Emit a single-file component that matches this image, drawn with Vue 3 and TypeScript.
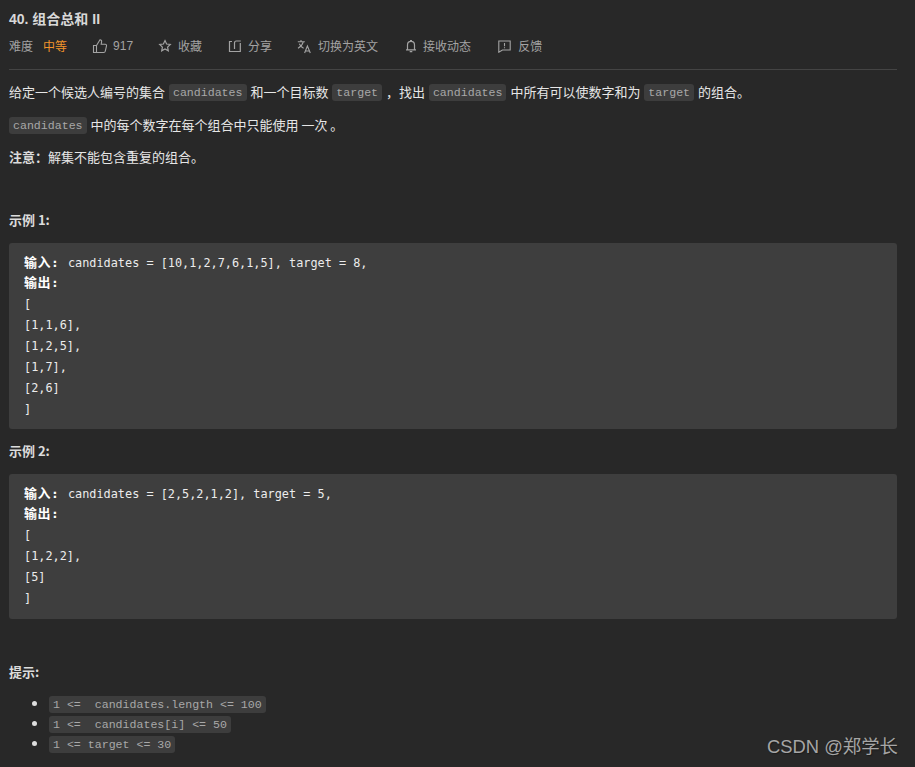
<script setup lang="ts">
</script>

<template>
  <div class="page">
    <div class="title">40. 组合总和 II</div>
    <div class="meta">
      <span class="item diff">难度<b>中等</b></span>
      <span class="item like">
        <svg width="16" height="16" viewBox="0 0 16 16" fill="none" stroke="currentColor" stroke-width="1.1"><path d="M1.500 7.500h3v7h-3zM4.500 7.500 8 1.800c1.200 0 1.800.8 1.600 2L9.200 6.200h4c1 0 1.500.8 1.300 1.700l-1.200 5.300c-.2.8-.7 1.300-1.600 1.300H4.500"/></svg>
        917
      </span>
      <span class="item fav">
        <svg width="14" height="14" viewBox="0 0 14 14" fill="none" stroke="currentColor" stroke-width="1.2"><path d="M7 1.600 8.600 5l3.700.5-2.700 2.600.7 3.700L7 10l-3.300 1.800.7-3.700-2.700-2.600L5.400 5z"/></svg>
        收藏
      </span>
      <span class="item share">
        <svg width="14" height="14" viewBox="0 0 14 14" fill="none" stroke="currentColor" stroke-width="1.2"><path d="M4 2.500H1.500v10h10.800V4M6.500 10V4c0-1.200.6-2 1.800-2h4.500"/></svg>
        分享
      </span>
      <span class="item lang">
        <svg width="15" height="15" viewBox="0 0 15 15" fill="none" stroke="currentColor" stroke-width="1.1"><path d="M.8 2.800h7M4 1v1.800M6.300 2.800C5.500 5.500 3.500 8 1 9.300M2.300 4.800c.9 2 2.500 3.500 4.300 4.400M7.600 14 10.400 7l2.900 7M8.600 12h3.800"/></svg>
        切换为英文
      </span>
      <span class="item bell">
        <svg width="12" height="14" viewBox="0 0 12 14" fill="none" stroke="currentColor" stroke-width="1.2"><path d="M1 10.800h10M2.500 10.800V6c0-2 1.400-3.600 3.500-3.600S9.500 4 9.500 6v4.800M5 1.500h2M4.700 12.600h2.600"/></svg>
        接收动态
      </span>
      <span class="item back">
        <svg width="13" height="13" viewBox="0 0 13 13" fill="none" stroke="currentColor" stroke-width="1.1"><path d="M.8 1h11.400v9H4.500L.8 12.200zM6.500 3v3.200M6.500 7.300v1"/></svg>
        反馈
      </span>
    </div>
    <div class="rule"></div>

    <p class="first">给定一个候选人编号的集合 <code>candidates</code> 和一个目标数 <code>target</code> ，找出 <code>candidates</code> 中所有可以使数字和为 <code>target</code> 的组合。</p>
    <p class="second"><code>candidates</code> 中的每个数字在每个组合中只能使用 一次 。</p>
    <p><strong>注意：</strong>解集不能包含重复的组合。</p>

    <p class="ex1"><strong>示例 1:</strong></p>
    <pre class="box"><span class="l1"><strong>输入:</strong> candidates = [10,1,2,7,6,1,5], target = 8,</span><strong>输出:</strong>
[
[1,1,6],
[1,2,5],
[1,7],
[2,6]
]</pre>
    <p class="ex2"><strong>示例 2:</strong></p>
    <pre class="box last"><span class="l1"><strong>输入:</strong> candidates = [2,5,2,1,2], target = 5,</span><strong>输出:</strong>
[
[1,2,2],
[5]
]</pre>

    <p class="hint"><strong>提示:</strong></p>
    <ul>
      <li><code>1 &lt;=&nbsp; candidates.length &lt;= 100</code></li>
      <li><code>1 &lt;=&nbsp; candidates[i] &lt;= 50</code></li>
      <li><code>1 &lt;= target &lt;= 30</code></li>
    </ul>
    <div class="mark">CSDN @郑学长</div>
  </div>
</template>

<style>
html, body { margin: 0; background: #282828; }
</style>

<style scoped>
.page {
  position: relative;
  box-sizing: border-box;
  width: 915px;
  height: 767px;
  overflow: hidden;
  padding: 10px 18px 0 9px;
  background: #282828;
  color: #e6e6e6;
  font: 13px/20px "Noto Sans CJK SC", "Liberation Sans", sans-serif;
}
.title {
  font: 700 14px/19px "Liberation Sans", "Noto Sans CJK SC", sans-serif;
  color: #d8d8d8;
}
.meta {
  display: flex;
  align-items: center;
  height: 20px;
  margin-top: 7px;
  font-size: 12px;
  color: #a3a3a3;
}
.item { display: inline-flex; align-items: center; gap: 6px; }
.item svg { flex: none; }
.diff b { font-weight: 400; color: #f2932b; margin-left: 4px; }
.like { margin-left: 25px; font-family: "Liberation Sans", sans-serif; gap: 5px; }
.fav { margin-left: 25px; gap: 6px; }
.share { margin-left: 26px; gap: 6px; }
.lang { margin-left: 25px; gap: 6px; }
.bell { margin-left: 27px; gap: 6px; }
.back { margin-left: 27px; gap: 7px; }
.rule { height: 1px; margin-top: 13px; background: #444; }
p { margin: 0 0 13px; white-space: nowrap; }
.first { margin-top: 12px; }
.first code { margin-left: 1px; }
.second { margin-bottom: 12px; }
strong { font-weight: 700; color: #dcdcdc; }
code {
  display: inline-block;
  margin-right: 1px;
  padding: 0 4px;
  border-radius: 3px;
  background: #3d3d3d;
  color: #a8a8a8;
  font: 11.6px/17px "Liberation Mono", monospace;
  vertical-align: 1px;
}
.ex1 { margin-top: 43px; margin-bottom: 13px; }
.box {
  margin: 0;
  padding: 9px 15px;
  border-radius: 3px;
  background: #3e3e3e;
  color: #ececec;
  font: 11.85px/21px "DejaVu Sans Mono", "Noto Sans CJK SC", monospace;
}
.l1 { display: block; margin: 1px 0 -1px; }
.box.last { padding-bottom: 10px; }
.box strong {
  margin-right: 1.5px;
  color: #fff;
  font-weight: 700;
  font-size: 13px;
  line-height: 0;
  letter-spacing: .5px;
}
.ex2 { margin: 12px 0 13px; }
.hint { margin: 43px 0 0; }
ul { margin: 12px 0 0; padding: 0 0 0 40px; }
li { height: 20px; line-height: 20px; }
li::marker { color: #ddd; }
.mark {
  position: absolute;
  right: 17px;
  bottom: 8px;
  color: #a6a6a6;
  font: 18.4px/24px "Liberation Sans", "Noto Sans CJK SC", sans-serif;
  text-shadow: 1px 1px 1px #1c1c1c;
}
</style>
